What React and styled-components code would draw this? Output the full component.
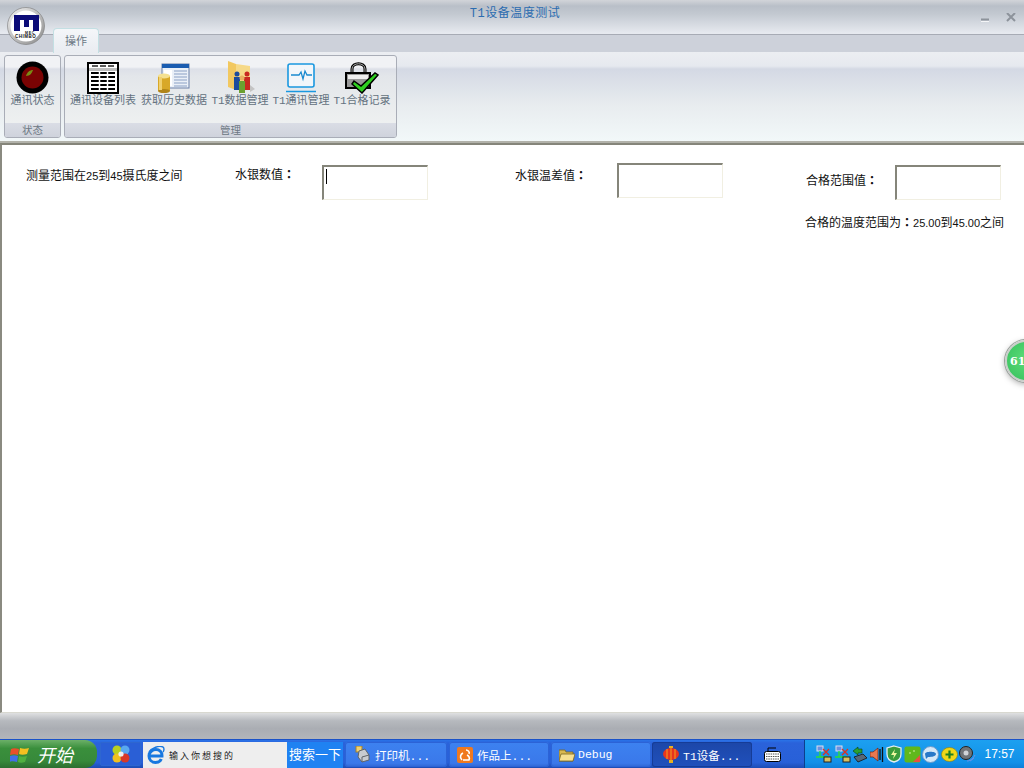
import React from "react";
import styled, { createGlobalStyle } from "styled-components";

const Global = createGlobalStyle`
  html, body { margin: 0; padding: 0; background: #fff; }
  * { box-sizing: border-box; }
`;
const CJK = `"Liberation Sans", "Noto Sans CJK SC", sans-serif`;
const Page = styled.div`
  position: relative; width: 1024px; height: 768px; overflow: hidden;
  display: flex; flex-direction: column; font-family: ${CJK};
`;
const TitleBar = styled.header`
  position: relative; height: 35px; flex: none;
  display: flex; align-items: flex-start; justify-content: center;
  border-bottom: 1px solid #a7abb5;
  background: linear-gradient(#d2d4d9 0, #b9bfc8 6px, #c3c9d1 14px, #e6e9ef 33px);
`;
const Title = styled.h1`
  margin: 6px 0 0 6px; font-size: 12px; line-height: 16px; font-weight: 400; color: #2b6cb0; letter-spacing: .5px;
  font-family: "Liberation Mono", "Noto Sans CJK SC", monospace;
`;
const WindowButtons = styled.div`
  position: absolute; right: 8px; top: 13px; display: flex; gap: 17px; align-items: flex-end;
`;
const Logo = styled.div`
  position: absolute; left: 7px; top: 7px; width: 38px; height: 38px; z-index: 3;
`;
const TabRow = styled.nav`
  height: 17px; flex: none; background: #cdd1da; padding-left: 53px; position: relative;
`;
const Tab = styled.div`
  position: absolute; left: 53px; top: -7px; width: 46px; height: 25px;
  background: linear-gradient(#f4f6f9, #e9ecf1);
  border: 1px solid #c3dfe3; border-bottom: none; border-radius: 4px 4px 0 0;
  text-align: center; font-size: 11px; line-height: 24px; color: #6b7784; z-index: 2;
`;
const Ribbon = styled.section`
  height: 91px; flex: none; display: flex; gap: 3px; padding: 3px 0 0 4px;
  background: linear-gradient(#eceef2 0, #e6e9ef 14px, #d4d9e4 17px, #e8ecef 60%, #f2f8f9 100%);
  border-bottom: 2px solid #b2b2aa;
  align-items: flex-start;
`;
const Group = styled.div`
  width: ${p => p.$w}px; height: 83px; display: flex; flex-direction: column;
  border: 1px solid #a9adb7; border-radius: 3px; overflow: hidden;
  background: linear-gradient(#f1f2f5 0, #f1f2f5 11px, #dde0e8 13px, #e3e6ea 20px, #f1f3f2 100%);
`;
const GroupItems = styled.div`
  flex: 1; display: flex; gap: 5px; padding-left: ${p => p.$pad}px;
`;
const GroupLabel = styled.div`
  height: 14px; text-align: center; font-size: 10.5px; line-height: 14px; color: #6d7884;
  background: linear-gradient(#dadde5, #cfd3dc);
`;
const RibbonItem = styled.div`
  width: ${p => p.$w}px; display: flex; flex-direction: column; align-items: center;
`;
const IconSlot = styled.div`
  height: 33px; margin-top: 5px; display: flex; align-items: center; justify-content: center;
`;
const ItemLabel = styled.div`
  font-size: 11px; line-height: 14px; white-space: nowrap; color: #647280;
  font-family: "Liberation Mono", "Noto Sans CJK SC", monospace;
`;
const Content = styled.main`
  flex: 1; background: #fff;
  border-left: 2px solid #8a8a80; border-top: 2px solid #85857a;
  border-bottom: 1px solid #d8d8d0;
`;
const Form = styled.form`
  display: grid; margin: 0; padding: 18px 0 0 24px;
  grid-template-columns: 209px 87px 193px 102px 189px 89px 106px;
  grid-template-rows: 37px auto;
`;
const Label = styled.div`
  margin-top: ${p => p.$top}px; font-size: 12px; line-height: 14px; color: #111; white-space: nowrap;
`;
const Num = styled.span`
  font-size: 11px;
`;
const Colon = styled.span`
  font-family: "Noto Sans CJK TC", sans-serif; font-weight: 700;
`;
const InputBox = styled.div`
  width: 106px; height: 35px; margin-top: ${p => p.$top}px; padding: 2px;
  background: #fff;
  border-style: solid; border-width: 2px 1px 1px 2px;
  border-color: #85857a #f1efe2 #f1efe2 #85857a;
`;
const Caret = styled.span`
  display: block; width: 1px; height: 15px; background: #000;
`;
const Result = styled.div`
  grid-column: 6 / span 2; margin: 15px 0 0 -1px; font-size: 12px; line-height: 14px; white-space: nowrap; color: #111;
`;
const Badge = styled.div`
  position: absolute; left: 1005px; top: 340px; width: 42px; height: 42px; border-radius: 50%;
  background: radial-gradient(circle at 50% 45%, #5cdc78, #35bf5c);
  border: 2px solid #c9cfca; box-shadow: 0 0 0 1px #9aa09c, 0 2px 6px rgba(0,0,0,.35);
  color: #fff; font: 700 11px/40px "DejaVu Serif", serif; padding-left: 3px; z-index: 4;
`;
const StatusStrip = styled.div`
  height: 26px; flex: none;
  background: linear-gradient(#dfe0e1, #b6b9be 30%, #aaadb3 60%, #b2b5ba);
`;
const Taskbar = styled.footer`
  height: 29px; flex: none; display: flex; align-items: stretch;
  background: linear-gradient(#2a73e8 0, #2a62da 3px, #2860d8 80%, #1d4cb4);
  border-top: 1px solid #1a52c8;
`;
const StartButton = styled.button`
  width: 97px; border: none; padding: 0 0 0 10px; display: flex; align-items: center; gap: 7px;
  border-radius: 0 12px 12px 0; color: #fff;
  background: linear-gradient(#6cb068, #3a8f3c 30%, #37893a 75%, #2c6e30);
  font: italic 18px "Liberation Serif", "Noto Sans CJK SC", serif;
`;
const Quick = styled.div`
  width: 41px; margin: 2px 0 2px 3px; display: flex; align-items: center; justify-content: center;
  border: 1px solid #2e66d0; background: #2a5fd6; border-radius: 2px;
`;
const Search = styled.div`
  width: 144px; display: flex; align-items: center; gap: 4px; padding-left: 3px; margin: 2px 0 0 2px; background: #eeeeee;
  font-size: 9px; letter-spacing: 2px; color: #222;
`;
const SearchButton = styled.div`
  width: 56px; margin-top: 2px; margin-right: 2px; background: #1f82f2; color: #fff; font-size: 13px; line-height: 26px; text-align: center; white-space: nowrap;
`;
const TaskButton = styled.div`
  width: ${p => p.$w}px; margin: 2px ${p => p.$gap}px 1px 0; display: flex; align-items: center; gap: ${p => p.$iconGap}px; padding-left: ${p => p.$pad}px;
  border-radius: 3px; color: #fff; font-size: 11.5px; white-space: nowrap;
  font-family: "Liberation Mono", "Noto Sans CJK SC", monospace;
  background: ${p => p.$active ? "linear-gradient(#1c47a8, #2050bc)" : "linear-gradient(#3d82f0, #3a78ea 85%, #2f66d2)"};
  box-shadow: inset 0 0 0 1px ${p => p.$active ? "#163c96" : "#2c63d6"};
`;
const KeyboardSlot = styled.div`
  width: 52px; display: flex; align-items: center; padding-left: 12px;
`;
const Tray = styled.div`
  flex: 1; display: flex; align-items: center; gap: 1.5px; padding-left: 10px;
  background: linear-gradient(#1ca0f0, #1290e8 80%, #0f7fd8);
  border-left: 1px solid #0d3f8c; color: #fff;
`;
const Clock = styled.span`
  margin-left: 7px; font-size: 12px; letter-spacing: 0;
`;

const Ball = () => (
  <svg width="33" height="33" viewBox="0 0 33 33">
    <circle cx="16.5" cy="16.5" r="16" fill="#000" />
    <circle cx="16.5" cy="16.5" r="11" fill="#7a0303" />
    <path d="M10 15c1-4 4-6 7-6-1 3-3 6-7 6z" fill="#7a8a14" />
  </svg>
);
const TableIcon = () => (
  <svg width="32" height="32" viewBox="0 0 32 32">
    <rect x="1" y="1" width="30" height="30" fill="#fff" stroke="#000" strokeWidth="2" />
    <path d="M5 4h6M13 4h6M21 4h6" stroke="#222" strokeWidth="1.5" />
    <rect x="2" y="6" width="28" height="3" fill="#bbb" />
    <path d="M4 11h24M4 15h24M4 19h24M4 23h24M4 27h24" stroke="#000" strokeWidth="2" />
    <path d="M12.5 10v19M20.5 10v19" stroke="#fff" strokeWidth="1.5" />
  </svg>
);
const WindowDb = () => (
  <svg width="32" height="30" viewBox="0 0 32 30">
    <rect x="4" y="1" width="27" height="24" fill="#eaf0f8" stroke="#6a80a8" />
    <rect x="4" y="1" width="27" height="4" fill="#1a5cb0" />
    <rect x="6" y="7" width="8" height="16" fill="#fff" />
    <path d="M16 8h13M16 11h13M16 14h13M16 17h13M16 20h13M16 23h13" stroke="#8aa0c4" />
    <rect x="0" y="13" width="12" height="15" fill="#d8a828" />
    <ellipse cx="6" cy="13" rx="6" ry="2.5" fill="#f4e090" />
    <ellipse cx="6" cy="28" rx="6" ry="2" fill="#b08418" />
    <rect x="1" y="14" width="3" height="13" fill="#f0d070" />
  </svg>
);
const FolderPeople = () => (
  <svg width="30" height="33" viewBox="0 0 30 33">
    <path d="M3 0l8 3v26L3 26z" fill="#f2c860" />
    <path d="M11 3l14 2v24H11z" fill="#f6d988" />
    <path d="M25 24l5 4-5 3z" fill="#c4c4c4" />
    <circle cx="12" cy="13" r="2.5" fill="#1c4c9c" /><rect x="9" y="16" width="6" height="13" fill="#1c4c9c" />
    <circle cx="22" cy="13" r="2.5" fill="#c82820" /><rect x="19" y="16" width="6" height="13" fill="#c82820" />
    <circle cx="17" cy="17" r="2.5" fill="#e8b060" /><rect x="14" y="20" width="6" height="12" fill="#6aa030" />
  </svg>
);
const Monitor = () => (
  <svg width="30" height="32" viewBox="0 0 30 32">
    <rect x="2" y="2" width="26" height="23" rx="2" fill="#f2f6fa" stroke="#1a98e0" strokeWidth="1.6" />
    <path d="M5 13h8l2-3 2 7 2-8 2 4h5" fill="none" stroke="#1a8ad0" strokeWidth="1.3" />
    <path d="M0 29.5h30" stroke="#1a98e0" strokeWidth="1.6" />
  </svg>
);
const LockCheck = () => (
  <svg width="34" height="32" viewBox="0 0 34 32">
    <path d="M7 11V7c0-7 13-7 13 0v4" fill="none" stroke="#000" strokeWidth="3" />
    <path d="M7 11V7c0-7 13-7 13 0v4" fill="none" stroke="#aaa" strokeWidth="1" />
    <rect x="1" y="11" width="24" height="15" fill="#999" stroke="#000" strokeWidth="2" />
    <rect x="3" y="13" width="20" height="4" fill="#eee" />
    <path d="M9 19l7 5L30 11l3 2-16 18-10-9z" fill="#2ed020" stroke="#000" strokeWidth="1.5" />
  </svg>
);
const LogoMark = () => (
  <svg width="38" height="38" viewBox="0 0 38 38">
    <defs>
      <linearGradient id="rim" x1="0" y1="0" x2="1" y2="1">
        <stop offset="0" stopColor="#f4f4f4" /><stop offset="1" stopColor="#8a8a8a" />
      </linearGradient>
    </defs>
    <circle cx="19" cy="19" r="18.5" fill="url(#rim)" stroke="#777" strokeWidth=".6" />
    <circle cx="19" cy="19" r="15.5" fill="#fff" />
    <path d="M7 8h25v16h-6V13h-4v7h-5v-7h-4v11H7z" fill="#0c0c78" />
    <text x="18" y="26.500" fontSize="3.500" fontFamily="Liberation Sans" fontWeight="700" fill="#111" letterSpacing=".8">MEC</text>
    <text x="8" y="31" fontSize="4.500" fontFamily="Liberation Sans" fontWeight="700" fill="#111" letterSpacing=".5">CHIMBO</text>
  </svg>
);
const Flag = () => (
  <svg width="20" height="19" viewBox="0 0 20 19">
    <path d="M1 4c2-1 5-1 8 0l-1 6c-3-1-5-1-8 0z" fill="#e8502a" />
    <path d="M10 3c3 1 6 1 9 0l-2 6c-3 1-6 1-8 0z" fill="#f4c020" />
    <path d="M0 11c3-1 5-1 8 0l-1 6c-3-1-5-1-8 0z" fill="#4070e8" />
    <path d="M9 11c2 1 5 1 8 0l-2 6c-3 1-5 1-7 0z" fill="#50b040" />
  </svg>
);
const Pinwheel = () => (
  <svg width="18" height="18" viewBox="0 0 18 18">
    <circle cx="5" cy="5" r="4.5" fill="#b8d020" />
    <circle cx="13" cy="5" r="4.5" fill="#58a8f0" />
    <circle cx="5" cy="13" r="4.5" fill="#f0c020" />
    <circle cx="13" cy="13" r="4.5" fill="#d83828" />
    <circle cx="9" cy="9" r="2.6" fill="#eee" />
  </svg>
);
const IeLogo = () => (
  <svg width="19" height="19" viewBox="0 0 19 19">
    <path d="M3 10h13c.3-4-2.6-6.5-6-6.5S3 6 3 10s3 6.5 6.5 6.5c2.6 0 4.8-1.2 5.8-3.5" fill="none" stroke="#1878e0" strokeWidth="3" />
    <path d="M3 6C6 2 13-1 17 1c1.500 1 1 4 0 5" fill="none" stroke="#1878e0" strokeWidth="1.400" />
  </svg>
);
const Printer = () => (
  <svg width="17" height="17" viewBox="0 0 17 17">
    <rect x="1" y="0" width="6" height="6" fill="#f0d070" stroke="#a08030" />
    <path d="M4 5l6-2 4 6v5l-7 2-4-5z" fill="#c8ccd0" stroke="#606468" />
    <path d="M7 16v-5l7-2" fill="none" stroke="#606468" />
  </svg>
);
const UcIcon = () => (
  <svg width="16" height="16" viewBox="0 0 16 16">
    <rect width="16" height="16" rx="2" fill="#f0791e" />
    <path d="M5 13c-3-3-1-6 1-7M6 13h6c1-2 0-4-2-5M9 3c2 0 4 2 3 4" fill="none" stroke="#fff" strokeWidth="1.600" />
  </svg>
);
const FolderIcon = () => (
  <svg width="16" height="14" viewBox="0 0 16 14">
    <path d="M0 2h6l1 2h7v9H0z" fill="#d8b850" stroke="#7a6420" strokeWidth=".8" />
    <path d="M2 6h14l-2 7H0z" fill="#f6e090" stroke="#7a6420" strokeWidth=".8" />
  </svg>
);
const Lantern = () => (
  <svg width="16" height="17" viewBox="0 0 16 17">
    <rect x="6" y="0" width="4" height="2" fill="#e8b020" />
    <ellipse cx="8" cy="8" rx="8" ry="6" fill="#e8341c" />
    <path d="M4 3v10M8 2v12M12 3v10" stroke="#f4a020" />
    <rect x="6" y="14" width="4" height="3" fill="#e8b020" />
  </svg>
);
const Keyboard = () => (
  <svg width="17" height="15" viewBox="0 0 17 15">
    <path d="M4 4V1h8" fill="none" stroke="#000" />
    <rect x=".5" y="4.500" width="16" height="10" rx="2" fill="#fff" stroke="#000" />
    <path d="M2 7h13M2 9.500h13M2 12h13" stroke="#555" strokeDasharray="1.500 .8" />
  </svg>
);
const NetX = () => (
  <svg width="17" height="18" viewBox="0 0 17 18">
    <rect x="2" y="1" width="6" height="5" fill="#6a90e0" stroke="#dde" />
    <path d="M5 6v6H1M5 12h8" stroke="#2ee030" strokeWidth="1.300" fill="none" />
    <path d="M8 4l6 6M14 4l-6 6" stroke="#e03020" strokeWidth="1.300" />
    <rect x="9" y="12" width="7" height="5" fill="#d8c060" stroke="#222" />
  </svg>
);
const TrayArrow = () => (
  <svg width="16" height="17" viewBox="0 0 16 17">
    <path d="M1 5l5-4v2h4v4H6v2z" fill="#2aa030" stroke="#0a4010" strokeWidth=".6" />
    <path d="M2 11l9-3 4 4-9 4z" fill="#586878" stroke="#111" strokeWidth=".8" />
  </svg>
);
const Speaker = () => (
  <svg width="15" height="17" viewBox="0 0 15 17">
    <path d="M0 6h3l5-4v13l-5-4H0z" fill="#e87850" stroke="#702010" strokeWidth=".7" />
    <path d="M10 3v11M12.500 1v15" stroke="#111" strokeWidth="1.300" />
  </svg>
);
const Shield = () => (
  <svg width="16" height="18" viewBox="0 0 16 18">
    <path d="M8 1l7 2v6c0 4-3 7-7 8-4-1-7-4-7-8V3z" fill="#3a9c3c" stroke="#e8eef0" strokeWidth="1.300" />
    <path d="M9 4L5 10h3l-1 4 4-6H8z" fill="#f0f8a0" />
  </svg>
);
const GreenCard = () => (
  <svg width="17" height="17" viewBox="0 0 17 17">
    <rect x=".5" y=".5" width="16" height="16" rx="2" fill="#60b81c" />
    <path d="M16 9l-7 7h7z" fill="#e85040" />
    <path d="M5 7h2M9 5h2" stroke="#d0f0a0" />
  </svg>
);
const Bubble = () => (
  <svg width="17" height="17" viewBox="0 0 17 17">
    <circle cx="8.500" cy="8.500" r="8" fill="#d4e8f8" stroke="#6a98c8" />
    <path d="M3 8c0-3 11-3 11 0s-7 3-8 3l-2 2z" fill="#2878c8" />
  </svg>
);
const PlusDisc = () => (
  <svg width="17" height="15" viewBox="0 0 17 15">
    <ellipse cx="8.500" cy="7.500" rx="8" ry="7" fill="#f0d818" stroke="#907808" strokeWidth=".6" />
    <path d="M8.500 3.500v8M4.500 7.500h8" stroke="#1e8020" strokeWidth="2.200" />
  </svg>
);
const SpeakerDisc = () => (
  <svg width="17" height="17" viewBox="0 0 17 17">
    <circle cx="7" cy="7" r="6.500" fill="#707478" stroke="#222" />
    <circle cx="7" cy="7" r="2.500" fill="#d0d4d8" />
    <path d="M8 15c3 0 6-2 8-6M11 15c2-1 3-2 4-3" stroke="#7090e8" fill="none" />
  </svg>
);

export default function App() {
  return (
    <Page>
      <Global />
      <TitleBar>
        <Logo><LogoMark /></Logo>
        <Title>T1设备温度测试</Title>
        <WindowButtons>
          <svg width="8" height="4" viewBox="0 0 8 4"><path d="M0 1.500h8" stroke="#8d939b" strokeWidth="2" /><path d="M0 3.500h8" stroke="#f4f5f7" /></svg>
          <svg width="10" height="9" viewBox="0 0 10 9"><path d="M1 0l8 8M9 0L1 8" stroke="#8d939b" strokeWidth="2" /></svg>
        </WindowButtons>
      </TitleBar>
      <TabRow><Tab>操作</Tab></TabRow>
      <Ribbon>
        <Group $w={57}>
          <GroupItems $pad={0}>
            <RibbonItem $w={55}><IconSlot><Ball /></IconSlot><ItemLabel>通讯状态</ItemLabel></RibbonItem>
          </GroupItems>
          <GroupLabel>状态</GroupLabel>
        </Group>
        <Group $w={333}>
          <GroupItems $pad={5}>
            <RibbonItem $w={66}><IconSlot><TableIcon /></IconSlot><ItemLabel>通讯设备列表</ItemLabel></RibbonItem>
            <RibbonItem $w={66}><IconSlot><WindowDb /></IconSlot><ItemLabel>获取历史数据</ItemLabel></RibbonItem>
            <RibbonItem $w={56}><IconSlot><FolderPeople /></IconSlot><ItemLabel>T1数据管理</ItemLabel></RibbonItem>
            <RibbonItem $w={56}><IconSlot><Monitor /></IconSlot><ItemLabel>T1通讯管理</ItemLabel></RibbonItem>
            <RibbonItem $w={56}><IconSlot><LockCheck /></IconSlot><ItemLabel>T1合格记录</ItemLabel></RibbonItem>
          </GroupItems>
          <GroupLabel>管理</GroupLabel>
        </Group>
      </Ribbon>
      <Content>
        <Form>
          <Label $top={6}>测量范围在<Num>25</Num>到<Num>45</Num>摄氏度之间</Label>
          <Label $top={4}>水银数值<Colon>：</Colon></Label>
          <div><InputBox $top={2}><Caret /></InputBox></div>
          <Label $top={5}>水银温差值<Colon>：</Colon></Label>
          <InputBox $top={0} />
          <Label $top={10}>合格范围值<Colon>：</Colon></Label>
          <InputBox $top={2} />
          <Result>合格的温度范围为<Colon>：</Colon><Num>25.00</Num>到<Num>45.00</Num>之间</Result>
        </Form>
      </Content>
      <StatusStrip />
      <Taskbar>
        <StartButton><Flag />开始</StartButton>
        <Quick><Pinwheel /></Quick>
        <Search><IeLogo />输入你想搜的</Search>
        <SearchButton>搜索一下</SearchButton>
        <TaskButton $w={102} $gap={2} $pad={10} $iconGap={3}><Printer />打印机...</TaskButton>
        <TaskButton $w={100} $gap={2} $pad={8} $iconGap={4}><UcIcon />作品上...</TaskButton>
        <TaskButton $w={100} $gap={1} $pad={8} $iconGap={3}><FolderIcon />Debug</TaskButton>
        <TaskButton $w={100} $gap={0} $pad={11} $iconGap={4} $active><Lantern />T1设备...</TaskButton>
        <KeyboardSlot><Keyboard /></KeyboardSlot>
        <Tray>
          <NetX /><NetX /><TrayArrow /><Speaker /><Shield /><GreenCard /><Bubble /><PlusDisc /><SpeakerDisc />
          <Clock>17:57</Clock>
        </Tray>
      </Taskbar>
      <Badge>61</Badge>
    </Page>
  );
}
